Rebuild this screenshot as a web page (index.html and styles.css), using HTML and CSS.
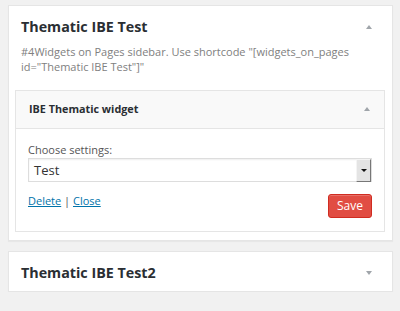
FILE: index.html
```html
<!DOCTYPE html>
<html>
<head>
<meta charset="utf-8">
<link rel="stylesheet" href="styles.css">
</head>
<body>
<div class="page">
  <div class="card">
    <div class="card-head">
      <h3 class="card-title">Thematic IBE Test</h3>
      <span class="arrow up"></span>
    </div>
    <p class="desc">#4Widgets on Pages sidebar. Use shortcode "[widgets_on_pages id="Thematic IBE Test"]"</p>
    <div class="widget">
      <div class="widget-head">
        <span class="widget-title">IBE Thematic widget</span>
        <span class="arrow up small"></span>
      </div>
      <div class="widget-body">
        <label class="field-label">Choose settings:</label>
        <div class="select">
          <span class="select-value">Test</span>
          <span class="select-btn"><span class="caret"></span></span>
        </div>
        <div class="actions">
          <div class="links"><a href="#" class="link">Delete</a> | <a href="#" class="link">Close</a></div>
          <button class="save">Save</button>
        </div>
      </div>
    </div>
  </div>
  <div class="card card-closed">
    <div class="card-head">
      <h3 class="card-title">Thematic IBE Test2</h3>
      <span class="arrow down"></span>
    </div>
  </div>
</div>
</body>
</html>
```
FILE: styles.css
```css
html, body {
  margin: 0;
  padding: 0;
  background: #f1f1f1;
  font-family: "Open Sans", "Liberation Sans", sans-serif;
}
.page {
  padding: 5px 7px 0 8px;
}
.card {
  background: #fff;
  border: 1px solid #e5e5e5;
  box-shadow: 0 1px 1px rgba(0,0,0,0.04);
  padding: 0 7px 8px 6px;
}
.card-closed {
  margin-top: 10px;
  padding-bottom: 0;
  height: 39px;
}
.card-head {
  display: flex;
  justify-content: space-between;
  align-items: center;
  padding: 11px 13px 0 6px;
}
.card-title {
  margin: 0;
  font-size: 14.3px;
  line-height: 20px;
  font-weight: 700;
  color: #2a2e33;
}
.arrow {
  width: 0;
  height: 0;
  border-left: 3.5px solid transparent;
  border-right: 3.5px solid transparent;
}
.arrow.up {
  border-bottom: 4px solid #a0a5aa;
}
.arrow.down {
  border-top: 4px solid #a0a5aa;
}
.desc {
  margin: 7px 0 0 6px;
  font-size: 11px;
  line-height: 15px;
  color: #808080;
}
.widget {
  margin-top: 16px;
  border: 1px solid #e5e5e5;
  background: #fff;
}
.widget-head {
  display: flex;
  justify-content: space-between;
  align-items: center;
  background: #f9f9f9;
  border-bottom: 1px solid #e5e5e5;
  padding: 10px 14px 12px 13px;
}
.widget-title {
  font-size: 10.8px;
  line-height: 15px;
  font-weight: 700;
  color: #2a2e33;
}
.widget-body {
  padding: 13px 12px 13px 12px;
}
.field-label {
  display: block;
  font-size: 11px;
  line-height: 15px;
  color: #555;
}
.select {
  margin-top: 1px;
  height: 24px;
  box-sizing: border-box;
  border: 1px solid #ddd;
  box-shadow: inset 0 1px 2px rgba(0,0,0,0.07);
  display: flex;
  align-items: center;
  justify-content: space-between;
  background: #fff;
}
.select-value {
  font-size: 13px;
  line-height: 18px;
  color: #333;
  padding-left: 5px;
}
.select-btn {
  width: 15px;
  height: 23px;
  box-sizing: border-box;
  background: #e4e4e4;
  border-top: 1px solid #f4f4f4;
  border-left: 1px solid #f4f4f4;
  border-right: 1px solid #777;
  border-bottom: 1px solid #777;
  display: flex;
  align-items: center;
  justify-content: center;
  align-self: stretch;
}
.caret {
  width: 0;
  height: 0;
  border-left: 3px solid transparent;
  border-right: 3px solid transparent;
  border-top: 3px solid #111;
}
.actions {
  margin-top: 11px;
  display: flex;
  justify-content: space-between;
  align-items: flex-start;
}
.links {
  font-size: 11px;
  line-height: 15px;
  color: #555;
}
.link {
  color: #0073aa;
  text-decoration: underline;
}
.save {
  margin-top: 1px;
  height: 24px;
  padding: 0 8px;
  background: #e14d43;
  border: 1px solid #d02c21;
  border-radius: 3px;
  color: #fff;
  font-family: "Open Sans", "Liberation Sans", sans-serif;
  font-size: 12px;
  line-height: 22px;
  box-shadow: inset 0 1px 0 rgba(255,255,255,0.2);
}
```
